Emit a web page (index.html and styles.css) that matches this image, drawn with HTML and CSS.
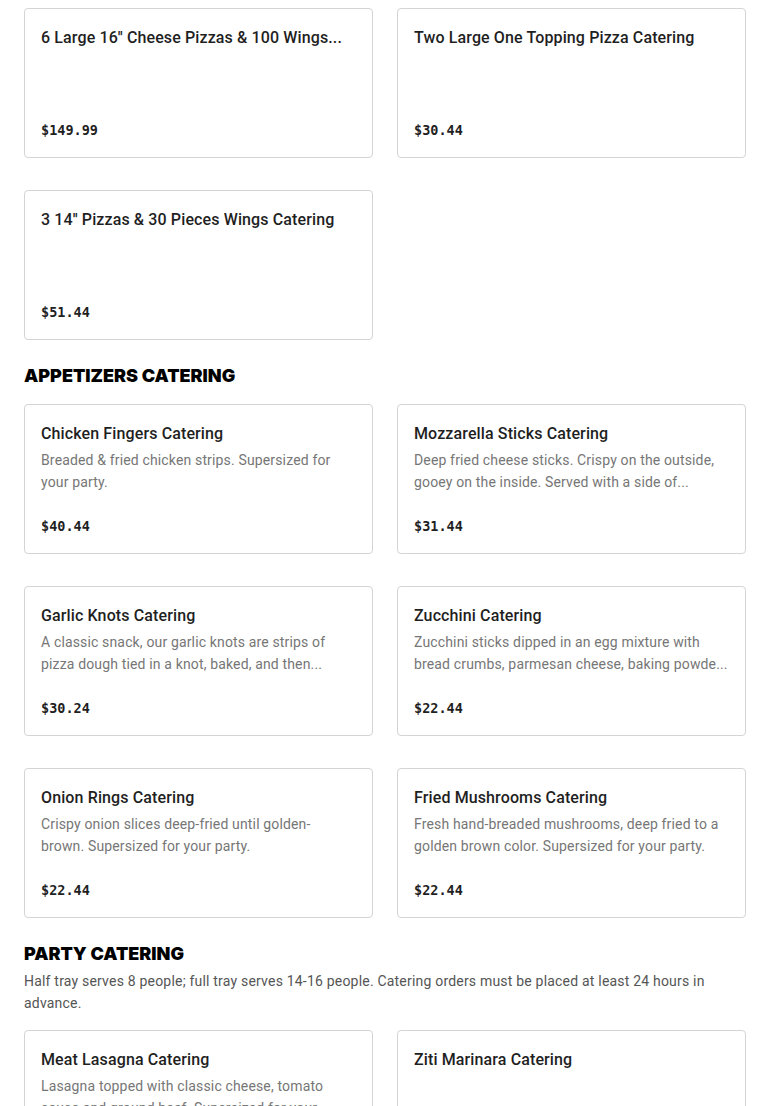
FILE: index.html
```html
<!DOCTYPE html>
<html>
<head>
<meta charset="utf-8">
<link rel="stylesheet" href="styles.css">
</head>
<body>
<div class="page">
  <div class="grid">
    <div class="card"><div class="title">6 Large 16'' Cheese Pizzas &amp; 100 Wings...</div><div class="price">$149.99</div></div>
    <div class="card"><div class="title">Two Large One Topping Pizza Catering</div><div class="price">$30.44</div></div>
    <div class="card"><div class="title">3 14'' Pizzas &amp; 30 Pieces Wings Catering</div><div class="price">$51.44</div></div>
  </div>

  <section class="section">
    <h2 class="heading">APPETIZERS CATERING</h2>
    <div class="grid">
      <div class="card"><div class="title">Chicken Fingers Catering</div><div class="desc">Breaded &amp; fried chicken strips. Supersized for your party.</div><div class="price">$40.44</div></div>
      <div class="card"><div class="title">Mozzarella Sticks Catering</div><div class="desc">Deep fried cheese sticks. Crispy on the outside, gooey on the inside. Served with a side of...</div><div class="price">$31.44</div></div>
      <div class="card"><div class="title">Garlic Knots Catering</div><div class="desc">A classic snack, our garlic knots are strips of pizza dough tied in a knot, baked, and then...</div><div class="price">$30.24</div></div>
      <div class="card"><div class="title">Zucchini Catering</div><div class="desc">Zucchini sticks dipped in an egg mixture with bread crumbs, parmesan cheese, baking powde...</div><div class="price">$22.44</div></div>
      <div class="card"><div class="title">Onion Rings Catering</div><div class="desc">Crispy onion slices deep-fried until golden-<br>brown. Supersized for your party.</div><div class="price">$22.44</div></div>
      <div class="card"><div class="title">Fried Mushrooms Catering</div><div class="desc">Fresh hand-breaded mushrooms, deep fried to a golden brown color. Supersized for your party.</div><div class="price">$22.44</div></div>
    </div>
  </section>

  <section class="section">
    <h2 class="heading">PARTY CATERING</h2>
    <p class="section-desc">Half tray serves 8 people; full tray serves 14-16 people. Catering orders must be placed at least 24 hours in advance.</p>
    <div class="grid">
      <div class="card"><div class="title">Meat Lasagna Catering</div><div class="desc">Lasagna topped with classic cheese, tomato sauce and ground beef. Supersized for your party.</div><div class="price">$45.44</div></div>
      <div class="card"><div class="title">Ziti Marinara Catering</div><div class="price">$35.44</div></div>
    </div>
  </section>
</div>
</body>
</html>
```

FILE: styles.css
```css
* { box-sizing: border-box; }
html, body { margin: 0; padding: 0; background: #fff; }
body { font-family: "Roboto", "Noto Sans", sans-serif; color: #222; }
.page { padding: 8px 24px 0 24px; }
.grid {
  display: grid;
  grid-template-columns: 349px 349px;
  column-gap: 24px;
  row-gap: 32px;
}
.card {
  height: 150px;
  border: 1px solid #d4d4d4;
  border-radius: 4px;
  padding: 17px 16px 16px 16px;
  display: flex;
  flex-direction: column;
  background: #fff;
}
.title {
  font-size: 16px;
  line-height: 24px;
  font-weight: 500;
  color: #1f1f1f;
  letter-spacing: 0.12px;
  white-space: nowrap;
  overflow: hidden;
}
.desc {
  margin-top: 3px;
  font-size: 14px;
  line-height: 22px;
  color: #767676;
  letter-spacing: 0.15px;
  max-height: 44px;
  overflow: hidden;
}
.price {
  margin-top: auto;
  font-family: "DejaVu Sans Mono", "Liberation Mono", monospace;
  font-weight: 700;
  font-size: 13.5px;
  line-height: 22px;
  color: #1f1f1f;
}
.section { margin-top: 24px; }
.heading {
  margin: 0 0 16px 0;
  font-family: "Inter", "Liberation Sans", sans-serif;
  font-size: 18px;
  line-height: 24px;
  font-weight: 900;
  color: #000;
}
.section-desc {
  margin: -12px 0 16px 0;
  font-size: 14px;
  line-height: 22px;
  color: #555;
  letter-spacing: 0.2px;
}
```
